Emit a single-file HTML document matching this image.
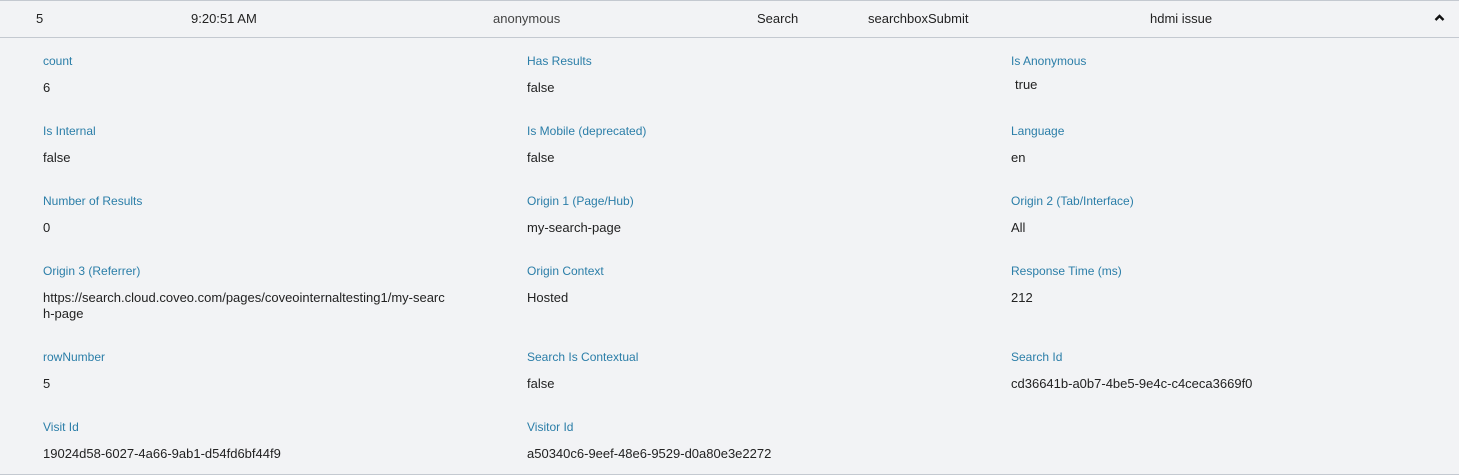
<!DOCTYPE html>
<html><head><meta charset="utf-8"><style>
html,body{margin:0;padding:0}
body{width:1459px;height:475px;background:#f2f3f5;position:relative;overflow:hidden;font-family:"Liberation Sans",sans-serif;color:#1d1d1d}
.l{position:absolute;font-size:12px;color:#2b7ea8;line-height:14px;white-space:nowrap}
.v{position:absolute;font-size:13px;line-height:16px;white-space:nowrap;color:#222}
.h{position:absolute;top:11px;font-size:13px;line-height:16px;white-space:nowrap;color:#222}
.line{position:absolute;left:0;width:1459px;height:1px;background:#c4c9d0}
</style></head><body>
<div class="line" style="top:0"></div>
<div class="line" style="top:37px"></div>
<div class="line" style="top:474px"></div>
<div class="h" style="left:36px">5</div>
<div class="h" style="left:191px">9:20:51 AM</div>
<div class="h" style="left:493px;color:#444">anonymous</div>
<div class="h" style="left:757px">Search</div>
<div class="h" style="left:868px">searchboxSubmit</div>
<div class="h" style="left:1150px">hdmi issue</div>
<svg style="position:absolute;left:1434px;top:14px" width="11" height="8" viewBox="0 0 11 8"><path d="M1.5 6L5.5 2L9.5 6" stroke="#111" stroke-width="2.4" fill="none"/></svg>

<div class="l" style="left:43px;top:54px">count</div><div class="v" style="left:43px;top:80px">6</div>
<div class="l" style="left:527px;top:54px">Has Results</div><div class="v" style="left:527px;top:80px">false</div>
<div class="l" style="left:1011px;top:54px">Is Anonymous</div><div class="v" style="left:1015px;top:77px">true</div>

<div class="l" style="left:43px;top:124px">Is Internal</div><div class="v" style="left:43px;top:150px">false</div>
<div class="l" style="left:527px;top:124px">Is Mobile (deprecated)</div><div class="v" style="left:527px;top:150px">false</div>
<div class="l" style="left:1011px;top:124px">Language</div><div class="v" style="left:1011px;top:150px">en</div>

<div class="l" style="left:43px;top:194px">Number of Results</div><div class="v" style="left:43px;top:220px">0</div>
<div class="l" style="left:527px;top:194px">Origin 1 (Page/Hub)</div><div class="v" style="left:527px;top:220px">my-search-page</div>
<div class="l" style="left:1011px;top:194px">Origin 2 (Tab/Interface)</div><div class="v" style="left:1011px;top:220px">All</div>

<div class="l" style="left:43px;top:264px">Origin 3 (Referrer)</div><div class="v" style="left:43px;top:290px">https://search.cloud.coveo.com/pages/coveointernaltesting1/my-searc<br>h-page</div>
<div class="l" style="left:527px;top:264px">Origin Context</div><div class="v" style="left:527px;top:290px">Hosted</div>
<div class="l" style="left:1011px;top:264px">Response Time (ms)</div><div class="v" style="left:1011px;top:290px">212</div>

<div class="l" style="left:43px;top:350px">rowNumber</div><div class="v" style="left:43px;top:376px">5</div>
<div class="l" style="left:527px;top:350px">Search Is Contextual</div><div class="v" style="left:527px;top:376px">false</div>
<div class="l" style="left:1011px;top:350px">Search Id</div><div class="v" style="left:1011px;top:376px">cd36641b-a0b7-4be5-9e4c-c4ceca3669f0</div>

<div class="l" style="left:43px;top:420px">Visit Id</div><div class="v" style="left:43px;top:446px">19024d58-6027-4a66-9ab1-d54fd6bf44f9</div>
<div class="l" style="left:527px;top:420px">Visitor Id</div><div class="v" style="left:527px;top:446px">a50340c6-9eef-48e6-9529-d0a80e3e2272</div>
</body></html>
